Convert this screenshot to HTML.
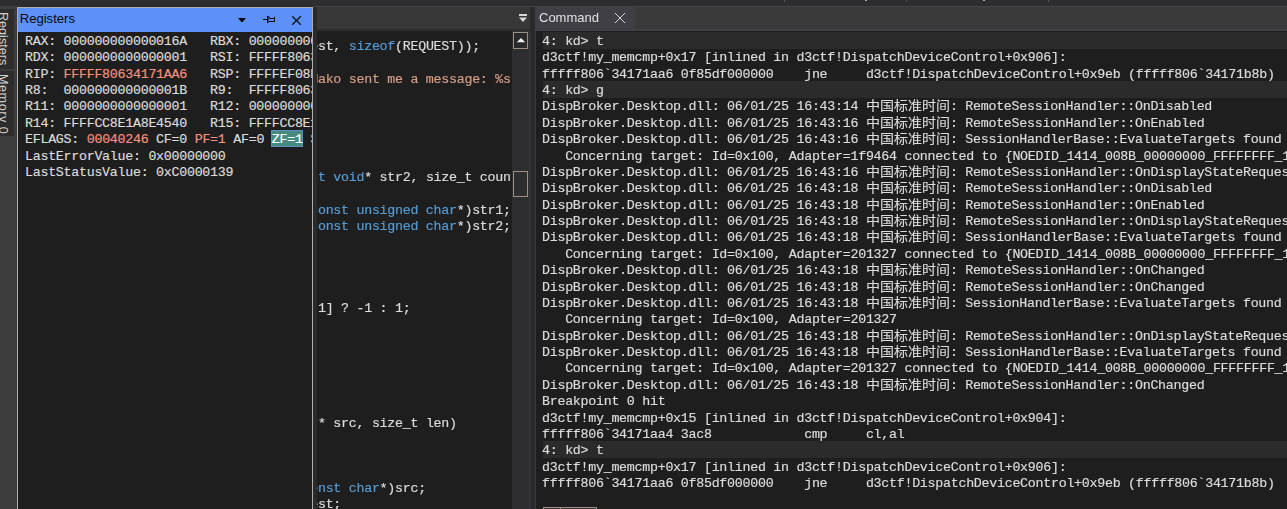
<!DOCTYPE html>
<html><head><meta charset="utf-8"><title>WinDbg</title>
<style>
html,body{margin:0;padding:0}
body{width:1287px;height:509px;overflow:hidden;background:#2d2d30;position:relative;font-family:"Liberation Sans","Noto Sans CJK SC",sans-serif}
.abs{position:absolute}
.mono{font-family:"Liberation Mono","Noto Sans CJK SC",monospace;font-size:13.3px;letter-spacing:-0.268px;white-space:pre;color:#dcdcdc;-webkit-text-stroke:0.18px}
.ln{position:absolute;left:0;height:17px;line-height:17px;white-space:pre}
.cj{font-family:"Liberation Mono","Noto Sans CJK SC",monospace;font-size:14px;display:inline-block;width:84px;height:17px;line-height:17px;vertical-align:top;letter-spacing:0;-webkit-text-stroke:0.1px;transform:translateY(0.4px) scaleY(0.92)}
.r{color:#f6917e}
.k{color:#569cd6}
.s{color:#d69d85}
.zf{color:#fff}
.hl{position:absolute;left:8px;right:0;background:#2b2b2b}
</style></head><body>

<div class="abs" style="left:784px;top:0;width:1px;height:2px;background:#555"></div>
<div class="abs" style="left:865px;top:0;width:2px;height:1px;background:#aaa"></div>
<div class="abs" style="left:906px;top:0;width:1px;height:2px;background:#555"></div>
<div class="abs" style="left:983px;top:0;width:2px;height:1px;background:#aaa"></div>
<div class="abs" style="left:1048px;top:0;width:1px;height:2px;background:#555"></div>
<div class="abs" style="left:313px;top:6px;width:974px;height:1px;background:#454545"></div>
<div class="abs" style="left:0;top:6px;width:17px;height:503px;background:#3c3c3c"></div>
<div class="abs" style="left:0;top:9px;width:14px;height:60px;background:#2d2d2d;overflow:hidden"><div class="abs vt" style="left:-4px;top:3px;writing-mode:vertical-rl;font-size:12.6px;color:#d0d0d0;line-height:14px;width:14px;white-space:nowrap">Registers</div></div>
<div class="abs" style="left:0;top:71px;width:14px;height:65px;background:#2d2d2d;overflow:hidden"><div class="abs vt" style="left:-4px;top:3px;writing-mode:vertical-rl;font-size:12.6px;color:#d0d0d0;line-height:14px;width:14px;white-space:nowrap;letter-spacing:0.55px">Memory 0</div></div>
<div class="abs" style="left:317px;top:7px;width:213px;height:23px;background:#383838"></div>
<div class="abs" style="left:317px;top:29px;width:213px;height:2px;background:#2d2d2d"></div>
<div class="abs" style="left:313px;top:31px;width:199px;height:478px;background:#1e1e1e;overflow:hidden">
<div class="mono abs" style="left:0;top:0;will-change:transform">
<div class="ln" style="top:7px;left:-2.8px">est, <span class="k">sizeof</span>(REQUEST));</div>
<div class="ln" style="top:40px;left:-2.8px"><span class="s">Mako sent me a message: %s</span></div>
<div class="ln" style="top:138px;left:-2.8px"><span class="k">st void</span>* str2, size_t count)</div>
<div class="ln" style="top:171px;left:-2.8px"><span class="k">const unsigned char</span>*)str1;</div>
<div class="ln" style="top:187px;left:-2.8px"><span class="k">const unsigned char</span>*)str2;</div>
<div class="ln" style="top:269px;left:-2.8px"> 1] ? -1 : 1;</div>
<div class="ln" style="top:384px;left:-2.8px"><span class="k">r</span>* src, size_t len)</div>
<div class="ln" style="top:449px;left:-2.8px"><span class="k">onst char</span>*)src;</div>
<div class="ln" style="top:465px;left:-2.8px">est;</div>
</div></div>
<div class="abs" style="left:313px;top:7px;width:4px;height:502px;background:#2a2a2a"></div>
<svg class="abs" style="left:518px;top:13px" width="10" height="10" viewBox="0 0 10 10"><rect x="1" y="1" width="8" height="2" fill="#d8d8d8"/><path d="M1 4.5h8l-4 4.5z" fill="#d8d8d8"/></svg>
<div class="abs" style="left:512px;top:31px;width:18px;height:478px;background:#2e2e30"></div>
<div class="abs" style="left:513px;top:32px;width:13px;height:15px;border:1px solid #9a9184;background:#2a2a2c"></div>
<svg class="abs" style="left:516px;top:37px" width="10" height="6" viewBox="0 0 10 6"><path d="M0.8 5.2L5 1l4.2 4.2z" fill="#f0f0f0"/></svg>
<div class="abs" style="left:513px;top:171px;width:13px;height:24px;border:1px solid #9a9184;background:#2e2e30"></div>
<div class="abs" style="left:529px;top:31px;width:1px;height:478px;background:#3a3a40"></div>
<div class="abs" style="left:530px;top:7px;width:5px;height:502px;background:#2a2a2c"></div>
<div class="abs" style="left:17px;top:7px;width:296px;height:502px;background:#adadad"></div>
<div class="abs" style="left:18px;top:8px;width:294px;height:24px;background:#5e91f8"></div>
<div class="abs" style="left:19.7px;top:7px;height:24px;line-height:23px;font-size:13.1px;color:#08080c">Registers</div>
<svg class="abs" style="left:238px;top:17px" width="9" height="6" viewBox="0 0 9 6"><path d="M0 1h8l-3.4 4h-1.2z" fill="#08080c"/></svg>
<svg class="abs" style="left:262px;top:15px" width="14" height="10" viewBox="0 0 14 10"><path d="M1 4.5H5.5M7.5 3.5H11.5L12.5 2.2M12.5 1.8V7M7 6.5H13M6.6 1.4L8 3.5" stroke="#08080c" stroke-width="1" fill="none"/><path d="M5.8 1V8" stroke="#08080c" stroke-width="1.5" fill="none"/></svg>
<svg class="abs" style="left:291px;top:15px" width="11" height="11" viewBox="0 0 11 11"><path d="M1.2 1.2l8.6 8.6M9.8 1.2l-8.6 8.6" stroke="#111" stroke-width="1.3" fill="none"/></svg>
<div class="abs" style="left:18px;top:32px;width:294px;height:477px;background:#1e1e1e;overflow:hidden"><div class="abs" style="left:253px;top:98px;width:30px;height:15px;background:#468a80;border:1px solid #5b8fc4"></div><div class="mono abs" style="left:7px;top:0">
<div class="ln" style="top:1px">RAX: 000000000000016A   RBX: 0000000000000000</div>
<div class="ln" style="top:17px">RDX: 0000000000000001   RSI: FFFFF80634175100</div>
<div class="ln" style="top:34px">RIP: <span class="r">FFFFF80634171AA6</span>   RSP: FFFFEF08B1A27300</div>
<div class="ln" style="top:50px">R8:  000000000000001B   R9:  FFFFF80634175100</div>
<div class="ln" style="top:66px">R11: 0000000000000001   R12: 0000000000000000</div>
<div class="ln" style="top:83px">R14: FFFFCC8E1A8E4540   R15: FFFFCC8E1E0C2D30</div>
<div class="ln" style="top:99px">EFLAGS: <span class="r">00040246</span> CF=0 <span class="r">PF=1</span> AF=0 <span class="zf">ZF=1</span> SF=0</div>
<div class="ln" style="top:116px">LastErrorValue: 0x00000000</div>
<div class="ln" style="top:132px">LastStatusValue: 0xC0000139</div>
</div></div>
<div class="abs" style="left:535px;top:7px;width:752px;height:24px;background:#3a3a3a"></div>
<div class="abs" style="left:535px;top:7px;width:100px;height:24px;background:#3f3f45"></div>
<div class="abs" style="left:535px;top:29px;width:752px;height:2px;background:#3f3f45"></div>
<div class="abs" style="left:539px;top:7px;height:22px;line-height:22px;font-size:13px;color:#e0e0e0;will-change:transform">Command</div>
<svg class="abs" style="left:614px;top:12px" width="12" height="12" viewBox="0 0 12 12"><path d="M1 1l10 10M11 1l-10 10" stroke="#d8d8d8" stroke-width="1" fill="none"/></svg>
<div class="abs" style="left:535px;top:31px;width:752px;height:478px;background:#1e1e1e;overflow:hidden">
<div class="abs" style="left:0;top:0;width:1px;height:478px;background:#38383c"></div>
<div class="hl" style="top:1.0px;height:16.5px"></div>
<div class="hl" style="top:50.0px;height:16.5px"></div>
<div class="hl" style="top:410.0px;height:16.5px"></div>
<div class="mono abs" style="left:7px;top:0;will-change:transform">
<div class="ln" style="top:2px">4: kd&gt; t</div>
<div class="ln" style="top:18px">d3ctf!my_memcmp+0x17 [inlined in d3ctf!DispatchDeviceControl+0x906]:</div>
<div class="ln" style="top:35px">fffff806`34171aa6 0f85df000000    jne     d3ctf!DispatchDeviceControl+0x9eb (fffff806`34171b8b)</div>
<div class="ln" style="top:51px">4: kd&gt; g</div>
<div class="ln" style="top:67px">DispBroker.Desktop.dll: 06/01/25 16:43:14 <span class="cj">中国标准时间</span>: RemoteSessionHandler::OnDisabled</div>
<div class="ln" style="top:84px">DispBroker.Desktop.dll: 06/01/25 16:43:16 <span class="cj">中国标准时间</span>: RemoteSessionHandler::OnEnabled</div>
<div class="ln" style="top:100px">DispBroker.Desktop.dll: 06/01/25 16:43:16 <span class="cj">中国标准时间</span>: SessionHandlerBase::EvaluateTargets found 1 target</div>
<div class="ln" style="top:117px">   Concerning target: Id=0x100, Adapter=1f9464 connected to {NOEDID_1414_008B_00000000_FFFFFFFF_1}</div>
<div class="ln" style="top:133px">DispBroker.Desktop.dll: 06/01/25 16:43:16 <span class="cj">中国标准时间</span>: RemoteSessionHandler::OnDisplayStateRequest</div>
<div class="ln" style="top:149px">DispBroker.Desktop.dll: 06/01/25 16:43:18 <span class="cj">中国标准时间</span>: RemoteSessionHandler::OnDisabled</div>
<div class="ln" style="top:166px">DispBroker.Desktop.dll: 06/01/25 16:43:18 <span class="cj">中国标准时间</span>: RemoteSessionHandler::OnEnabled</div>
<div class="ln" style="top:182px">DispBroker.Desktop.dll: 06/01/25 16:43:18 <span class="cj">中国标准时间</span>: RemoteSessionHandler::OnDisplayStateRequest</div>
<div class="ln" style="top:198px">DispBroker.Desktop.dll: 06/01/25 16:43:18 <span class="cj">中国标准时间</span>: SessionHandlerBase::EvaluateTargets found 1 target</div>
<div class="ln" style="top:215px">   Concerning target: Id=0x100, Adapter=201327 connected to {NOEDID_1414_008B_00000000_FFFFFFFF_1}</div>
<div class="ln" style="top:231px">DispBroker.Desktop.dll: 06/01/25 16:43:18 <span class="cj">中国标准时间</span>: RemoteSessionHandler::OnChanged</div>
<div class="ln" style="top:248px">DispBroker.Desktop.dll: 06/01/25 16:43:18 <span class="cj">中国标准时间</span>: RemoteSessionHandler::OnChanged</div>
<div class="ln" style="top:264px">DispBroker.Desktop.dll: 06/01/25 16:43:18 <span class="cj">中国标准时间</span>: SessionHandlerBase::EvaluateTargets found 1 target</div>
<div class="ln" style="top:280px">   Concerning target: Id=0x100, Adapter=201327</div>
<div class="ln" style="top:297px">DispBroker.Desktop.dll: 06/01/25 16:43:18 <span class="cj">中国标准时间</span>: RemoteSessionHandler::OnDisplayStateRequest</div>
<div class="ln" style="top:313px">DispBroker.Desktop.dll: 06/01/25 16:43:18 <span class="cj">中国标准时间</span>: SessionHandlerBase::EvaluateTargets found 1 target</div>
<div class="ln" style="top:329px">   Concerning target: Id=0x100, Adapter=201327 connected to {NOEDID_1414_008B_00000000_FFFFFFFF_1}</div>
<div class="ln" style="top:346px">DispBroker.Desktop.dll: 06/01/25 16:43:18 <span class="cj">中国标准时间</span>: RemoteSessionHandler::OnChanged</div>
<div class="ln" style="top:362px">Breakpoint 0 hit</div>
<div class="ln" style="top:379px">d3ctf!my_memcmp+0x15 [inlined in d3ctf!DispatchDeviceControl+0x904]:</div>
<div class="ln" style="top:395px">fffff806`34171aa4 3ac8            cmp     cl,al</div>
<div class="ln" style="top:411px">4: kd&gt; t</div>
<div class="ln" style="top:428px">d3ctf!my_memcmp+0x17 [inlined in d3ctf!DispatchDeviceControl+0x906]:</div>
<div class="ln" style="top:444px">fffff806`34171aa6 0f85df000000    jne     d3ctf!DispatchDeviceControl+0x9eb (fffff806`34171b8b)</div>
</div>
<div class="abs" style="left:8px;top:476px;width:52px;height:10px;border:1px solid #9a9184;background:#2e2e30"></div>
<div class="abs" style="left:25px;top:476px;width:1px;height:10px;background:#9a9184"></div>
</div>
</body></html>
